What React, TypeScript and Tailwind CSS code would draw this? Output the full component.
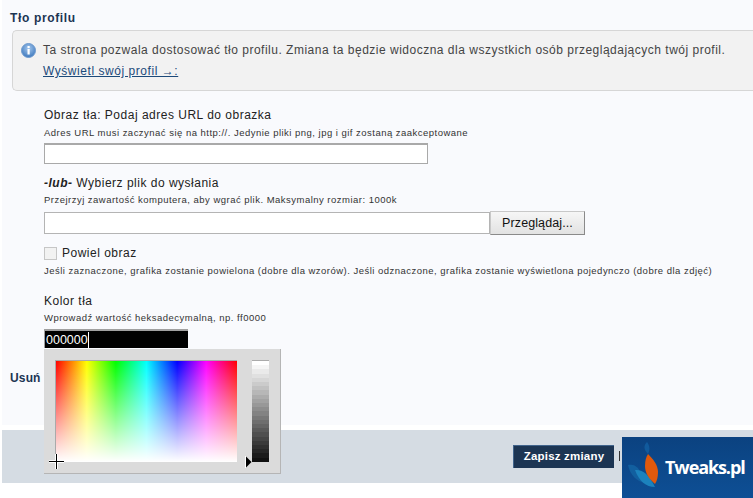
import React from "react";

const font = "font-['Liberation_Sans',Arial,sans-serif]";

function Help({ children }: { children: React.ReactNode }) {
  return <p className="text-[9.5px] leading-[12px] text-[#333] whitespace-nowrap tracking-[0.48px]">{children}</p>;
}

function Label({ children }: { children: React.ReactNode }) {
  return <div className="text-[12px] leading-[16px] text-[#222] tracking-[0.5px] whitespace-nowrap">{children}</div>;
}

function Picker() {
  const steps = Array.from({ length: 24 }, (_, i) => {
    const v = Math.round(255 - (i * (255 - 17)) / 23);
    return `rgb(${v},${v},${v})`;
  });
  return (
    <div className="absolute left-[44px] top-[349px] w-[237px] h-[125px] bg-[#dbdbdb] border-r border-b border-[#b5b5b5]">
      <div className="absolute left-[11px] top-[11px] w-[182px] h-[102px] border-t border-l border-[#aaa] bg-[linear-gradient(to_right,#f00,#ff0_17%,#0f0_33%,#0ff_50%,#00f_67%,#f0f_83%,#f00)]">
        <div className="w-full h-full bg-[linear-gradient(to_bottom,rgba(255,255,255,0),#fff)]" />
      </div>
      <div className="absolute left-[208px] top-[11px] w-[17px] h-[102px] border-t border-[#aaa] flex flex-col">
        {steps.map((c) => (
          <div key={c} className="flex-1" style={{ background: c }} />
        ))}
      </div>
      <svg className="absolute left-[201px] top-[107px]" width="7" height="12" viewBox="0 0 7 12">
        <path d="M0.5 0 L0.5 12" stroke="#fff" strokeWidth="1" />
        <path d="M1 0.5 L6.5 6 L1 11.5 Z" fill="#000" />
      </svg>
      <svg className="absolute left-[5px] top-[105px]" width="15" height="15" viewBox="0 0 15 15">
        <path d="M0 7.5H15M7.5 0V15" stroke="#fff" strokeWidth="3" />
        <path d="M0 7.5H15M7.5 0V15" stroke="#000" strokeWidth="1" />
      </svg>
    </div>
  );
}

function Logo() {
  return (
    <div className="absolute left-[622px] top-[437px] w-[131px] h-[61px] bg-[linear-gradient(to_bottom,#0b4280,#0e4f95)] flex items-center">
      <svg className="shrink-0" width="40" height="61" viewBox="0 0 40 61">
        <path d="M6 28 C10 27 13 28 16 31 L24 46 C15 45 8 38 6 28 Z" fill="#125f9f" />
        <path d="M13 33 C20 32 27 37 33 50 C24 50 17 44 13 33 Z" fill="#1c82bd" />
        <path d="M25 5 C28 9 28 13 26 17 C22 13 21 9 25 5 Z" fill="#115a9c" />
        <path d="M26 17 C31 22 36 28 36 35 C36 40 35 44 33 47 C27 42 23 36 23 29 C23 24 24 20 26 17 Z" fill="#e0590c" />
      </svg>
      <span className="ml-[3px] -mt-[2px] font-['Open_Sans',sans-serif] font-bold text-[18px] leading-none text-white tracking-[-1.1px]">Tweaks.pl</span>
    </div>
  );
}

export default function App() {
  return (
    <div className={`relative w-[753px] h-[498px] overflow-hidden bg-white ${font}`}>
      <div className="ml-[2px] h-[425px] bg-[#f9fafd] flex flex-col">
        <h2 className="ml-[8px] mt-[11px] text-[12px] leading-[15px] font-bold text-[#1c3553] tracking-[0.65px]">Tło profilu</h2>
        <div className="ml-[10px] mt-[4px] h-[61px] border border-r-0 border-[#d6d6d6] rounded-l-[5px] bg-[#f2f2f2] pl-[8px] pt-[9px] flex items-start">
          <svg className="shrink-0 mt-[3px]" width="15" height="15" viewBox="0 0 15 15">
            <defs>
              <radialGradient id="i" cx="50%" cy="35%" r="65%">
                <stop offset="0%" stopColor="#a5c8ee" />
                <stop offset="100%" stopColor="#3d78bd" />
              </radialGradient>
            </defs>
            <circle cx="7.5" cy="7.5" r="7" fill="url(#i)" stroke="#6f9bcf" strokeWidth="1" />
            <rect x="6.5" y="3" width="2.2" height="2" fill="#fff" />
            <rect x="6.5" y="6" width="2.2" height="5.5" fill="#fff" />
          </svg>
          <div className="ml-[7px]">
            <p className="text-[12px] leading-[20px] text-[#444] tracking-[0.5px] whitespace-nowrap">Ta strona pozwala dostosować tło profilu. Zmiana ta będzie widoczna dla wszystkich osób przeglądających twój profil.</p>
            <a className="block mt-px text-[12px] leading-[20px] text-[#1c4a7a] underline tracking-[0.55px] whitespace-nowrap">Wyświetl swój profil →:</a>
          </div>
        </div>

        <div className="ml-[42px] mt-[16px] flex flex-col items-start">
          <Label>Obraz tła: Podaj adres URL do obrazka</Label>
          <div className="mt-[4px]"><Help>Adres URL musi zaczynać się na http://. Jedynie pliki png, jpg i gif zostaną zaakceptowane</Help></div>
          <div className="mt-[4px] w-[384px] h-[21px] bg-white border border-[#a9a9a9] border-t-2" />

          <div className="mt-[11px]"><Label><b className="italic">-lub-</b> Wybierz plik do wysłania</Label></div>
          <div className="mt-[3px]"><Help>Przejrzyj zawartość komputera, aby wgrać plik. Maksymalny rozmiar: 1000k</Help></div>
          <div className="mt-[6px] flex items-start">
            <div className="w-[446px] h-[22px] bg-white border border-[#b4b4b4]" />
            <button className="-mt-[1px] w-[95px] h-[24px] border border-[#c8c8c8] border-b-[#8a8a8a] border-r-[#8a8a8a] bg-[linear-gradient(to_bottom,#f6f6f6,#e2e2e2)] text-[12.5px] text-[#111] tracking-[0.1px]">Przeglądaj...</button>
          </div>

          <div className="mt-[10px] flex items-center">
            <div className="w-[13px] h-[13px] border border-[#c6c6c6] bg-[#f2f2f2]" />
            <div className="ml-[5px]"><Label>Powiel obraz</Label></div>
          </div>
          <div className="mt-[4px]"><Help>Jeśli zaznaczone, grafika zostanie powielona (dobre dla wzorów). Jeśli odznaczone, grafika zostanie wyświetlona pojedynczo (dobre dla zdjęć)</Help></div>

          <div className="mt-[16px]"><Label>Kolor tła</Label></div>
          <div className="mt-[3px]"><Help>Wprowadź wartość heksadecymalną, np. ff0000</Help></div>
          <div className="mt-[5px] w-[144px] h-[19px] bg-black border-t-2 border-l border-[#a0a0a0] flex items-center pl-[1px]">
            <span className="text-[12.5px] leading-[16px] text-white">000000</span>
            <span className="w-px h-[16px] bg-white" />
          </div>
        </div>
        <h2 className="ml-[8px] mt-[23px] text-[12px] leading-[15px] font-bold text-[#1c3553] tracking-[0.15px]">Usuń</h2>
      </div>

      <div className="ml-[2px] mt-[5px] h-[53px] bg-[#d5dce3] flex items-start">
        <button className="ml-[511px] mt-[15px] w-[101px] h-[23px] bg-[#1c3553] border-t border-l border-[#41648c] text-white font-bold text-[11.5px] tracking-[0.2px]">Zapisz zmiany</button>
        <span className="ml-[5px] mt-[21px] w-px h-[10px] bg-[#333]" />
      </div>

      <Picker />
      <Logo />
    </div>
  );
}
